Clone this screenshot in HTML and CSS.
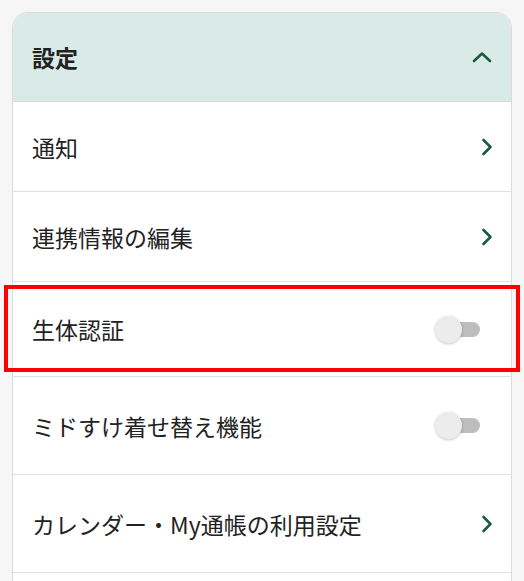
FILE: index.html
```html
<!DOCTYPE html>
<html lang="ja">
<head>
  <meta charset="UTF-8">
  <meta name="viewport" content="width=device-width, initial-scale=1.0">
  <title>設定</title>
  <link rel="stylesheet" href="styles.css">
</head>
<body>

  <div class="panel">
    <div class="panel-head">
      <span>設定</span>
      <svg class="chev-up" width="20" height="12" viewBox="0 0 20 12"><path d="M2 10 L10 2.5 L18 10" /></svg>
    </div>

    <div class="row">
      <span>通知</span>
      <svg class="chev" width="12" height="18" viewBox="0 0 12 18"><path d="M2.5 2 L9.5 9 L2.5 16" /></svg>
    </div>

    <div class="row">
      <span>連携情報の編集</span>
      <svg class="chev" width="12" height="18" viewBox="0 0 12 18"><path d="M2.5 2 L9.5 9 L2.5 16" /></svg>
    </div>

    <div class="row tall marked">
      <span>生体認証</span>
      <div class="toggle"><div class="knob"></div></div>
    </div>

    <div class="row taller">
      <span>ミドすけ着せ替え機能</span>
      <div class="toggle"><div class="knob"></div></div>
    </div>

    <div class="row taller">
      <span>カレンダー・My通帳の利用設定</span>
      <svg class="chev" width="12" height="18" viewBox="0 0 12 18"><path d="M2.5 2 L9.5 9 L2.5 16" /></svg>
    </div>

    <div class="row"></div>
  </div>

</body>
</html>
```

FILE: styles.css
```css
body {
  margin: 0;
  padding: 12px 12px 0;
  background: #f6f6f6;
  font-family: 'Noto Sans CJK JP', 'Noto Sans', sans-serif;
  color: #222;
  overflow: hidden;
}
.panel {
  width: 500px;
  background: #fff;
  border: 1px solid #dcdcdc;
  border-bottom: none;
  border-radius: 16px 16px 0 0;
  box-sizing: border-box;
}
.panel-head {
  display: flex;
  align-items: center;
  justify-content: space-between;
  height: 88px;
  padding: 0 19px 0 19px;
  background: #daebe7;
  border-radius: 15px 15px 0 0;
  border-bottom: 1px solid #d6dedc;
  font-size: 23px;
  font-weight: 700;
}
.row {
  position: relative;
  display: flex;
  align-items: center;
  justify-content: space-between;
  height: 89px;
  padding: 0 18px 0 19px;
  border-bottom: 1px solid #e0e0e0;
  font-size: 23px;
}
.row.tall {
  height: 94px;
}
.row.taller {
  height: 97px;
}
.chev-up path, .chev path {
  fill: none;
  stroke: #1d5a3e;
  stroke-width: 2.6;
  stroke-linecap: round;
  stroke-linejoin: round;
}
.toggle {
  position: relative;
  width: 42px;
  height: 15px;
  margin-right: 13px;
  border-radius: 8px;
  background: #bdbdbd;
}
.knob {
  position: absolute;
  left: -3px;
  top: -6px;
  width: 27px;
  height: 27px;
  border-radius: 50%;
  background: #ececec;
  box-shadow: 0 1px 3px rgba(0, 0, 0, 0.22);
}
.marked::after {
  content: "";
  position: absolute;
  left: -9px;
  right: -9px;
  top: 3px;
  bottom: 4px;
  border: 4px solid #ff0000;
}
```
